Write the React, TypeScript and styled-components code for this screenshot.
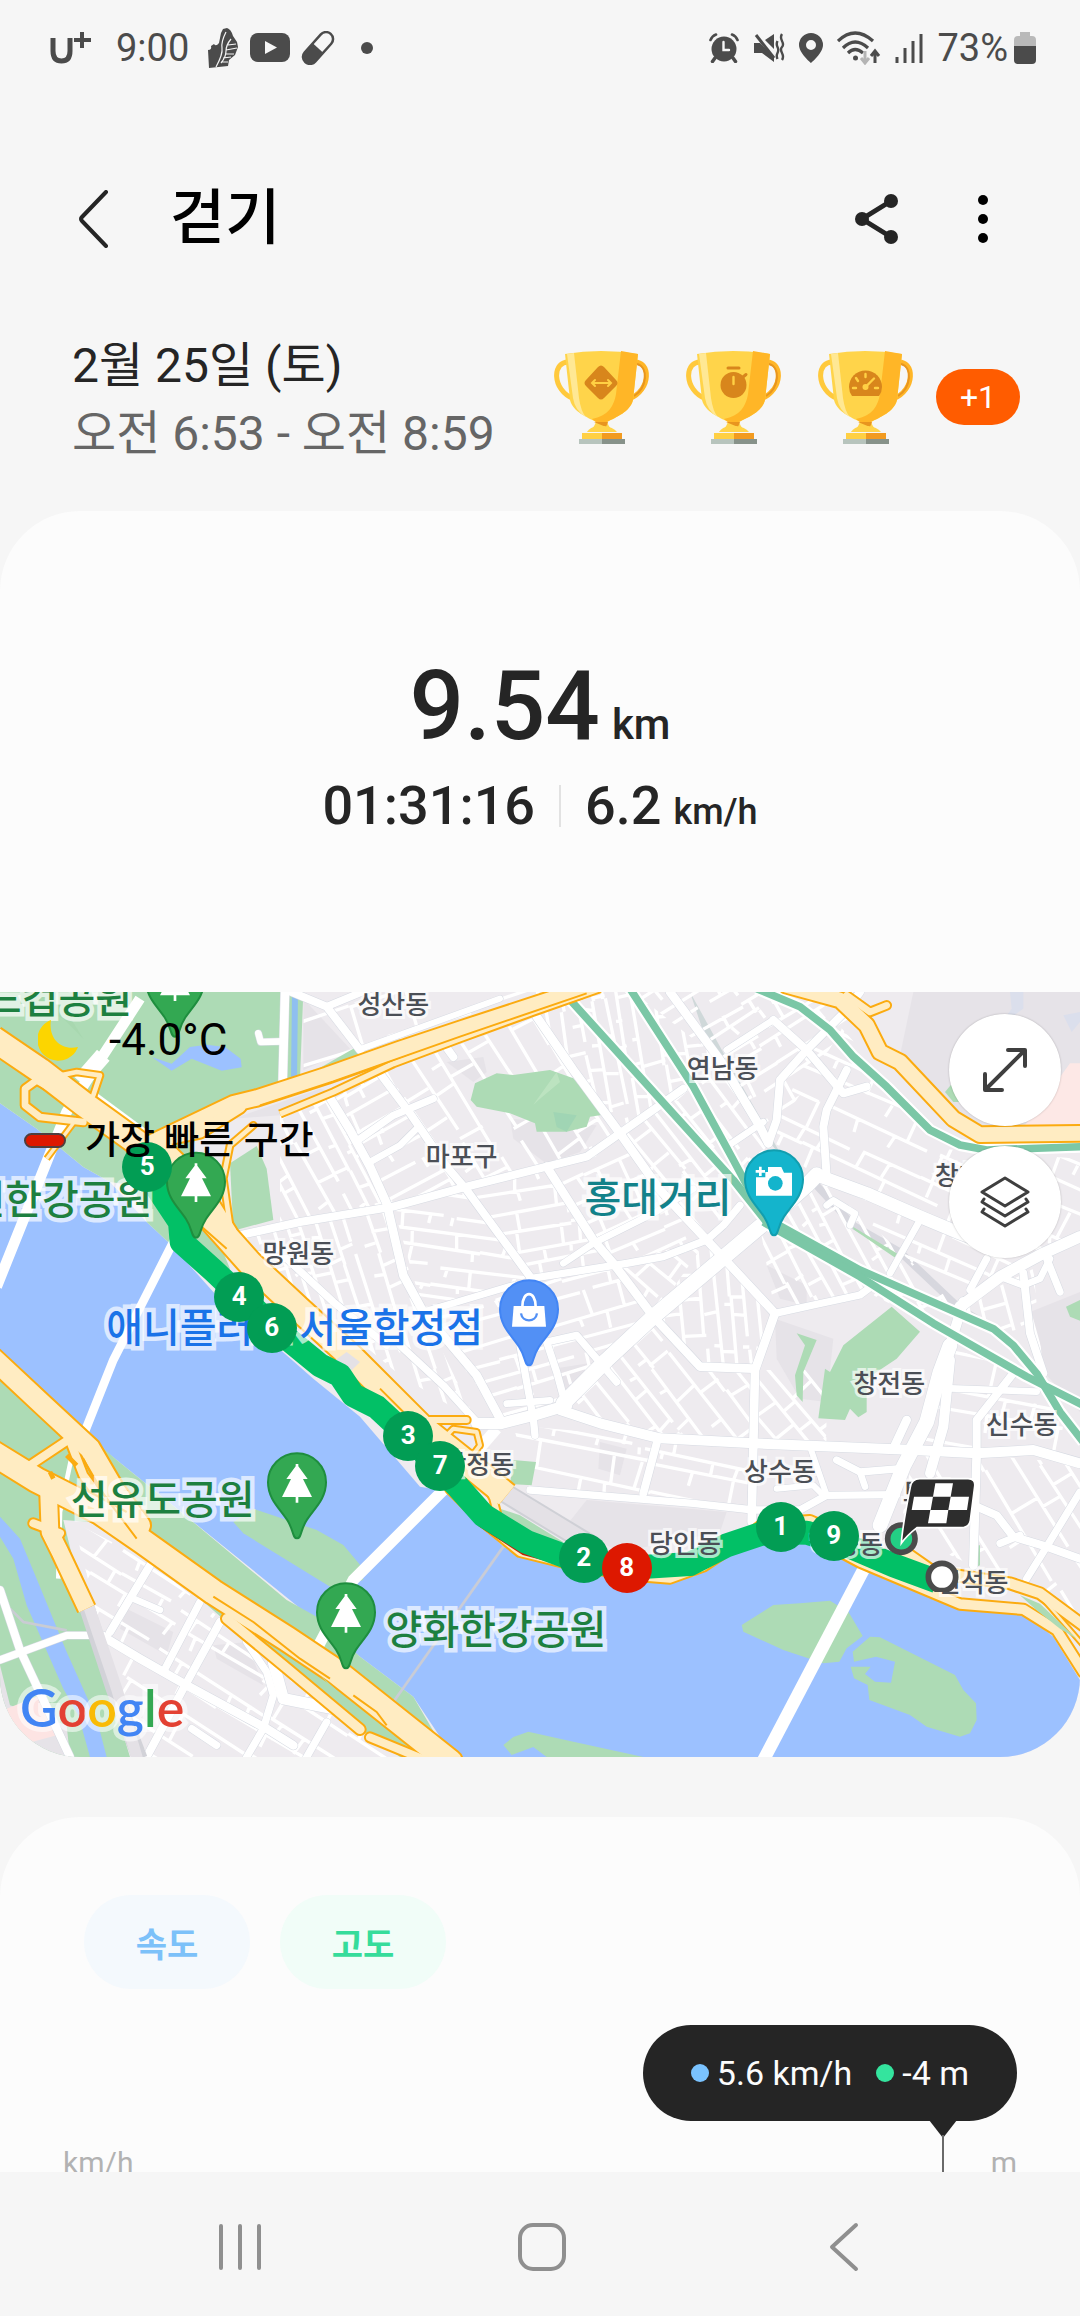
import React from "react";
import styled, { createGlobalStyle } from "styled-components";

const GlobalStyle = createGlobalStyle`
  *, *::before, *::after { box-sizing: border-box; }
  body {
    margin: 0;
    background: #f6f6f6;
    color: #252525;
    font-family: Roboto, "Noto Sans CJK KR", sans-serif;
  }
  button { border: 0; padding: 0; background: none; font: inherit; color: inherit; cursor: pointer; }
  h1, p { margin: 0; }
  svg { display: block; }
`;

/* ---------- shell ---------- */

const Screen = styled.div`
  display: flex;
  flex-direction: column;
  height: 100vh;
`;

const StatusBar = styled.div`
  display: flex;
  align-items: center;
  justify-content: space-between;
  flex: none;
  height: 96px;
  padding: 0 44px 0 50px;
  color: #4b4b4b;
  font-size: 38px;
  line-height: 44px;
`;

const StatusGroup = styled.div<{ $gap: number }>`
  display: flex;
  align-items: center;
  gap: ${(p) => p.$gap}px;
`;

const StatusTime = styled.span`
  margin: 0 7px 0 13px;
`;

const Content = styled.main`
  flex: 1;
  min-height: 0;
  overflow-y: auto;
  scrollbar-width: none;
`;

const TopBar = styled.header`
  display: flex;
  align-items: center;
  height: 234px;
  padding: 12px 67px 0 64px;
`;

const IconButton = styled.button`
  display: flex;
  align-items: center;
  justify-content: center;
  width: 60px;
  height: 72px;
`;

const Title = styled.h1`
  flex: 1;
  margin-left: 46px;
  color: #000;
  font-size: 60px;
  font-weight: 500;
  line-height: 72px;
`;

const TopActions = styled.div`
  display: flex;
  gap: 46px;
`;

const MetaRow = styled.section`
  display: flex;
  align-items: center;
  justify-content: space-between;
  margin-bottom: 43px;
  padding: 2px 60px 0 72px;
`;

const MetaLine = styled.p<{ $muted?: boolean }>`
  color: ${(p) => (p.$muted ? "#666" : "#252525")};
  font-size: 48px;
  line-height: 68px;
`;

const Awards = styled.div`
  display: flex;
  align-items: center;
  gap: 36px;
  padding-bottom: 6px;
`;

const MoreBadge = styled.button`
  width: 84px;
  height: 56px;
  margin-left: -14px;
  border-radius: 28px;
  background: #ff5c00;
  color: #fff;
  font-size: 32px;
  line-height: 56px;
`;

/* ---------- cards ---------- */

const WorkoutCard = styled.section`
  margin-bottom: 60px;
  overflow: hidden;
  border-radius: 80px;
  background: #fcfcfc;
`;

const Summary = styled.div`
  display: flex;
  flex-direction: column;
  align-items: center;
  gap: 12px;
  padding: 139px 24px 154px;
  font-weight: 500;
`;

const Distance = styled.p`
  font-size: 96px;
  line-height: 112px;
`;

const Unit = styled.span<{ $size: number }>`
  margin-left: 12px;
  font-size: ${(p) => p.$size}px;
  line-height: 1;
`;

const SubStats = styled.div`
  display: flex;
  align-items: center;
  font-size: 54px;
  line-height: 64px;
`;

const Divider = styled.span`
  width: 2px;
  height: 42px;
  margin: 0 24px;
  background: #e2e2e2;
`;

const ChartCard = styled.section`
  min-height: 640px;
  padding: 78px 63px 0;
  border-radius: 80px 80px 0 0;
  background: #fcfcfc;
`;

const Chips = styled.div`
  display: flex;
  gap: 30px;
  padding: 0 21px;
`;

const Chip = styled.button<{ $fg: string; $bg: string }>`
  width: 166px;
  height: 94px;
  border-radius: 47px;
  background: ${(p) => p.$bg};
  color: ${(p) => p.$fg};
  font-size: 34px;
  font-weight: 700;
`;

const TooltipRow = styled.div`
  display: flex;
  justify-content: flex-end;
  margin-top: 36px;
`;

const Tooltip = styled.div`
  position: relative;
  display: flex;
  align-items: center;
  height: 96px;
  padding: 0 48px;
  border-radius: 48px;
  background: #252525;
  color: #fcfcfc;
  font-size: 34px;
  line-height: 40px;

  &::before {
    content: "";
    position: absolute;
    top: 95px;
    right: 60px;
    border: 14px solid transparent;
    border-top: 18px solid #252525;
    border-bottom: 0;
  }

  &::after {
    content: "";
    position: absolute;
    top: 110px;
    right: 73px;
    width: 2px;
    height: 420px;
    background: #6a6a6a;
  }
`;

const Reading = styled.span<{ $dot: string }>`
  display: flex;
  align-items: center;
  gap: 8px;

  & + & { margin-left: 24px; }

  &::before {
    content: "";
    width: 18px;
    height: 18px;
    border-radius: 50%;
    background: ${(p) => p.$dot};
  }
`;

const AxisLabels = styled.div`
  display: flex;
  justify-content: space-between;
  margin-top: 24px;
  color: #b2b2b2;
  font-size: 30px;
  line-height: 36px;
`;

/* ---------- navigation bar ---------- */

const NavBar = styled.nav`
  display: flex;
  align-items: center;
  justify-content: space-around;
  flex: none;
  height: 144px;
  padding: 6px 85px 0 89px;
  background: #f6f6f6;
`;

const NavButton = styled.button`
  display: flex;
  align-items: center;
  justify-content: center;
  width: 120px;
  height: 100px;
`;

/* ---------- map ---------- */

const MAP_W = 3240;
const MAP_H = 2295;

const MapFrame = styled.div`
  position: relative;
  overflow: hidden;
  aspect-ratio: 1080 / 765;
  background: #eeebef;
`;

const MapSvg = styled.svg`
  width: 100%;
  height: 100%;
`;

const Pin = styled.div<{ $x: number; $y: number }>`
  position: absolute;
  left: ${(p) => (p.$x / MAP_W) * 100}%;
  top: ${(p) => (p.$y / MAP_H) * 100}%;
  transform: translate(-50%, -50%);
`;

const PlaceLabel = styled(Pin)<{ $color: string; $big?: boolean }>`
  color: ${(p) => p.$color};
  font-family: "Noto Sans CJK KR", sans-serif;
  font-size: ${(p) => (p.$big ? 40 : 26)}px;
  font-weight: 500;
  line-height: ${(p) => (p.$big ? 48 : 32)}px;
  white-space: nowrap;
  paint-order: stroke fill;
  -webkit-text-stroke: ${(p) => (p.$big ? 9 : 6)}px rgba(255, 255, 255, 0.66);
`;

const KmMarker = styled(Pin)<{ $fast?: boolean }>`
  width: 50px;
  height: 50px;
  border-radius: 50%;
  background: ${(p) => (p.$fast ? "#dd1800" : "#029d54")};
  color: #fff;
  font-size: 26px;
  font-weight: 700;
  line-height: 48px;
  text-align: center;
`;

const MapLegend = styled.div`
  position: absolute;
  top: 24px;
  left: 24px;
  display: grid;
  grid-template-columns: 42px auto;
  align-items: center;
  gap: 52px 19px;
  color: #000;
`;

const Temperature = styled.span`
  padding-left: 24px;
  font-size: 44px;
  line-height: 48px;
`;

const LegendText = styled.span`
  font-size: 38px;
  font-weight: 500;
  line-height: 48px;
`;

const MoonBox = styled.span`
  padding-left: 14px;
`;

const FastSwatch = styled.span`
  height: 15px;
  border: 2px solid #4f3f3f;
  border-radius: 8px;
  background: #dd1800;
`;

const MapActions = styled.div`
  position: absolute;
  top: 22px;
  right: 19px;
  display: flex;
  flex-direction: column;
  gap: 20px;
`;

const RoundButton = styled.button`
  display: flex;
  align-items: center;
  justify-content: center;
  width: 112px;
  height: 112px;
  border-radius: 50%;
  background: #fff;
  box-shadow: 0 0 2px rgba(0, 0, 0, 0.25);
`;

const Wordmark = styled.div`
  position: absolute;
  bottom: 18px;
  left: 20px;
  font-family: Lato, sans-serif;
  font-size: 52px;
  font-weight: 600;
  line-height: 64px;
  paint-order: stroke fill;
  -webkit-text-stroke: 10px rgba(255, 255, 255, 0.55);
`;

const Letter = styled.span<{ $c: string }>`
  color: ${(p) => p.$c};
`;

type Pt = [number, number];
const line = (pts: Pt[]) => "M" + pts.map((p) => p.join(",")).join("L");

const rng = (seed: number) => () => {
  seed = (seed * 1664525 + 1013904223) % 4294967296;
  return seed / 4294967296;
};

/* Lanes of one city block: long streets at an angle, joined by short cross streets. */
const lanes = (poly: Pt[], angle: number, step: number, seed: number) => {
  const r = rng(seed);
  const cx = poly.reduce((s, p) => s + p[0], 0) / poly.length;
  const cy = poly.reduce((s, p) => s + p[1], 0) / poly.length;
  const R = Math.max(...poly.map((p) => Math.hypot(p[0] - cx, p[1] - cy)));
  const a = (angle * Math.PI) / 180;
  const at = (u: number, v: number) =>
    `${Math.round(cx + u * Math.cos(a) - v * Math.sin(a))},${Math.round(cy + u * Math.sin(a) + v * Math.cos(a))}`;
  let d = "";
  for (let v = -R; v < R; ) {
    const next = v + step * (0.7 + r() * 0.8);
    let u = -R;
    while (u < R) {
      const len = 160 + r() * 320;
      const bend = (r() - 0.5) * 20;
      d += `M${at(u, v)}L${at(u + len, v + bend)}`;
      u += len + (r() > 0.6 ? 40 : 0);
    }
    for (u = -R; u < R; u += step * (1 + r() * 2)) {
      if (r() > 0.2) d += `M${at(u, v)}L${at(u + (r() - 0.5) * 16, r() > 0.7 ? (v + next) / 2 : next)}`;
    }
    v = next;
  }
  return d;
};

const BLOCKS: { p: Pt[]; a: number; s: number }[] = [
  { p: [[910, 0], [1700, 0], [1200, 150], [910, 250]], a: -18, s: 84 },
  { p: [[840, 370], [985, 309], [1160, 640], [840, 700]], a: 62, s: 42 },
  { p: [[985, 309], [1140, 244], [1400, 584], [1160, 640]], a: -28, s: 50 },
  { p: [[1140, 244], [1610, 74], [1860, 424], [1640, 524], [1400, 584]], a: 58, s: 58 },
  { p: [[1610, 74], [1700, 0], [1900, 0], [2160, 204], [1860, 424]], a: 80, s: 52 },
  { p: [[1900, 0], [2600, 0], [2305, 454], [2160, 204]], a: -32, s: 50 },
  { p: [[1860, 424], [2160, 204], [2305, 454], [2120, 744]], a: 52, s: 54 },
  { p: [[1180, 644], [1400, 584], [1590, 854], [1270, 960]], a: 8, s: 50 },
  { p: [[1400, 584], [1640, 524], [1840, 814], [1590, 854]], a: -10, s: 48 },
  { p: [[1640, 524], [1860, 424], [2120, 744], [1840, 814]], a: -24, s: 50 },
  { p: [[720, 734], [1160, 640], [1270, 960], [1430, 1290], [1200, 1150], [900, 900]], a: 72, s: 46 },
  { p: [[1270, 960], [1840, 814], [1960, 974], [1690, 1250], [1510, 1290]], a: -16, s: 56 },
  { p: [[1840, 814], [2120, 744], [1960, 974]], a: 40, s: 50 },
  { p: [[1960, 974], [2120, 744], [2325, 964], [2260, 1130], [2100, 1124]], a: 84, s: 50 },
  { p: [[1690, 1250], [1960, 974], [2100, 1124], [2260, 1130], [2260, 1350], [1980, 1339]], a: 52, s: 48 },
  { p: [[1540, 1300], [1980, 1339], [2260, 1354], [2260, 1550], [1590, 1494]], a: 12, s: 56 },
  { p: [[2305, 454], [2480, 60], [2700, 300], [2820, 470], [3240, 500], [3240, 734], [2880, 944], [2450, 549]], a: 24, s: 60 },
  { p: [[2325, 964], [2280, 704], [2450, 549], [2880, 944], [2800, 1000], [2600, 900]], a: 62, s: 52 },
  { p: [[2260, 1134], [2480, 1134], [2480, 1374], [2260, 1354]], a: 50, s: 56 },
  { p: [[2740, 1374], [3240, 1414], [3240, 1880], [2960, 1740], [2700, 1620]], a: 58, s: 84 },
  { p: [[2840, 1060], [3100, 1160], [3240, 1300], [3240, 1400], [2740, 1374]], a: 10, s: 84 },
  { p: [[2880, 944], [3100, 830], [3130, 1144], [2980, 1020]], a: 76, s: 48 },
  { p: [[220, 1590], [440, 1704], [680, 1894], [1000, 2164], [1200, 2295], [400, 2295]], a: 32, s: 64 },
];

const ROADS: { p: Pt[]; w: number }[] = [
  { p: [[1140, 244], [1230, 364], [1340, 524], [1400, 594], [1590, 854]], w: 24 },
  { p: [[985, 309], [1050, 414], [1110, 524], [1160, 634], [1180, 720], [1210, 850], [1270, 960], [1430, 1150], [1500, 1280]], w: 26 },
  { p: [[1200, 1060], [1330, 1180], [1430, 1290]], w: 22 },
  { p: [[700, 734], [900, 690], [1180, 644], [1400, 584], [1640, 524], [1760, 494], [1860, 424], [2050, 290]], w: 24 },
  { p: [[1080, 440], [1180, 370], [1300, 320]], w: 22 },
  { p: [[1110, 510], [1200, 460], [1255, 405]], w: 20 },
  { p: [[1335, 160], [1360, 195]], w: 24 },
  { p: [[2180, 174], [2320, 84]], w: 20 },
  { p: [[1610, 74], [1720, 234], [1860, 424], [1980, 594], [2120, 744], [2325, 964], [2265, 1134], [2255, 1590]], w: 26 },
  { p: [[1640, 524], [1780, 744], [1840, 814], [1960, 974], [2100, 1124], [2260, 1130]], w: 26 },
  { p: [[1590, 860], [1880, 814], [1990, 794], [2120, 744], [2170, 700], [2220, 640]], w: 22 },
  { p: [[1690, 814], [1780, 754], [1960, 664], [2080, 590]], w: 20 },
  { p: [[1270, 960], [1540, 880]], w: 20 },
  { p: [[2450, 549], [2420, 580], [2280, 704], [1960, 974], [1820, 1104], [1690, 1234]], w: 46 },
  { p: [[1700, 1240], [1600, 1270], [1500, 1295], [1430, 1294]], w: 34 },
  { p: [[1700, 1250], [1670, 1140], [1640, 1050], [1730, 1030], [1790, 1100], [1850, 1170]], w: 22 },
  { p: [[1560, 1060], [1600, 1280], [1605, 1330]], w: 22 },
  { p: [[1520, 1235], [1650, 1225]], w: 20 },
  { p: [[720, 780], [860, 800], [1000, 930], [1160, 1060]], w: 22 },
  { p: [[1680, 1254], [1800, 1294], [1980, 1339], [2260, 1354], [2740, 1374], [2930, 1384], [3100, 1374], [3240, 1414]], w: 30 },
  { p: [[1970, 1354], [1930, 1504]], w: 24 },
  { p: [[1590, 1494], [2080, 1534], [2260, 1554], [2400, 1554], [2480, 1510], [2690, 1508]], w: 22 },
  { p: [[2330, 1490], [2440, 1480], [2470, 1510]], w: 18 },
  { p: [[2430, 1364], [2480, 1510]], w: 18 },
  { p: [[2850, 1060], [2820, 1140], [2780, 1290], [2710, 1424], [2640, 1600]], w: 44 },
  { p: [[2850, 1104], [2830, 1304], [2790, 1444]], w: 30 },
  { p: [[2510, 1404], [2580, 1440], [2700, 1430]], w: 22 },
  { p: [[2580, 1440], [2595, 1484]], w: 20 },
  { p: [[2720, 1284], [2680, 1370]], w: 26 },
  { p: [[2450, 549], [2600, 604], [2760, 674], [2880, 724], [3000, 770]], w: 38 },
  { p: [[2880, 944], [3000, 854], [3130, 784], [3240, 734]], w: 34 },
  { p: [[2890, 930], [2850, 1060]], w: 30 },
  { p: [[2960, 800], [2910, 894]], w: 22 },
  { p: [[3000, 854], [3070, 880], [3120, 860], [3150, 800]], w: 20 },
  { p: [[3140, 800], [3180, 900]], w: 22 },
  { p: [[2480, 554], [2470, 404], [2480, 354], [2540, 234]], w: 24 },
  { p: [[2305, 454], [2330, 384], [2340, 264], [2420, 174], [2540, 54], [2580, 0]], w: 24 },
  { p: [[2320, 84], [2420, 174], [2530, 304], [2600, 284]], w: 24 },
  { p: [[2010, 0], [2160, 204], [2280, 404], [2305, 454]], w: 26 },
  { p: [[2180, 464], [2290, 390]], w: 20 },
  { p: [[2760, 684], [2670, 844]], w: 20 },
  { p: [[2325, 964], [2440, 939], [2580, 909], [2640, 864]], w: 22 },
  { p: [[2480, 640], [2500, 625], [2565, 665], [2550, 700]], w: 20 },
  { p: [[3070, 844], [3090, 1024], [3130, 1144]], w: 24 },
  { p: [[2930, 1384], [2930, 1284], [3040, 1144]], w: 24 },
  { p: [[2930, 1384], [2920, 1720]], w: 26 },
  { p: [[2850, 1189], [3110, 1199]], w: 20 },
  { p: [[2930, 1544], [2990, 1570], [3040, 1634], [3140, 1664], [3240, 1700]], w: 24 },
  { p: [[3240, 1500], [3140, 1664], [3080, 1760]], w: 22 },
  { p: [[3000, 1654], [3060, 1630]], w: 22 },
  { p: [[850, -10], [980, 44], [1080, 174]], w: 24 },
  { p: [[980, 44], [1110, -10]], w: 22 },
  { p: [[1085, 170], [1500, 20]], w: 18 },
  { p: [[775, 124], [782, 150], [850, 148]], w: 20 },
  { p: [[855, 0], [848, 270]], w: 26 },
  { p: [[0, 1794], [60, 1974], [210, 2295]], w: 24 },
  { p: [[0, 2004], [200, 1930], [310, 1930]], w: 22 },
  { p: [[330, 1920], [450, 1720]], w: 24 },
  { p: [[400, 1820], [480, 1854]], w: 20 },
  { p: [[490, 2040], [600, 1830]], w: 22 },
  { p: [[320, 1940], [420, 2000], [560, 2080], [800, 2210], [880, 2260]], w: 26 },
  { p: [[660, 1890], [550, 2090], [440, 2295]], w: 24 },
  { p: [[740, 1950], [800, 2040], [820, 2110], [790, 2210], [740, 2295]], w: 22 },
  { p: [[820, 2010], [850, 2120], [1000, 2150]], w: 34 },
  { p: [[980, 2190], [920, 2295]], w: 22 },
  { p: [[575, 2210], [650, 2260]], w: 22 },
];

const HIGHWAYS: { p: Pt[]; w: number; flat?: boolean }[] = [
  { p: [[460, 450], [700, 335], [770, 318], [980, 250], [1200, 172], [1380, 112], [1740, -6]], w: 52 },
  { p: [[460, 450], [600, 420], [720, 345]], w: 40 },
  { p: [[840, 366], [1000, 300], [1180, 215], [1380, 140], [1600, 60], [1800, -10]], w: 22, flat: true },
  { p: [[190, 310], [110, 265], [75, 290], [75, 340], [120, 375], [250, 390]], w: 26 },
  { p: [[110, 265], [230, 240], [300, 250], [280, 310]], w: 20 },
  { p: [[140, 500], [230, 380]], w: 16, flat: true },
  { p: [[690, 700], [670, 560], [690, 460], [760, 400]], w: 20 },
  { p: [[500, 470], [590, 560], [690, 720]], w: 46 },
  { p: [[-20, 140], [120, 235], [250, 335], [430, 465], [540, 560], [640, 690], [750, 814], [900, 954], [1060, 1100], [1260, 1300], [1410, 1420], [1520, 1510]], w: 78, flat: true },
  { p: [[1280, 1284], [1400, 1284]], w: 24 },
  { p: [[1340, 1330], [1360, 1310], [1430, 1320], [1440, 1360], [1410, 1400]], w: 18 },
  { p: [[1440, 1440], [1480, 1520], [1500, 1600]], w: 24 },
  { p: [[1350, 1490], [1450, 1590], [1560, 1680], [1690, 1712], [1880, 1750], [2010, 1760], [2110, 1724], [2200, 1664], [2290, 1594], [2430, 1584], [2560, 1640]], w: 30 },
  { p: [[2270, 1640], [2430, 1630], [2580, 1710], [2880, 1836], [3070, 1852], [3170, 1914], [3250, 2040]], w: 34 },
  { p: [[2700, 1670], [2800, 1740], [3030, 1774], [3120, 1804], [3250, 1900]], w: 36 },
  { p: [[3120, 1810], [3250, 1960]], w: 14 },
  { p: [[2360, -20], [2520, 24], [2600, 100], [2640, 180], [2700, 210], [2860, 380], [2940, 428], [3250, 424]], w: 50 },
  { p: [[2540, 10], [2610, 60], [2660, 40]], w: 26 },
  { p: [[-20, 1400], [90, 1420], [210, 1340]], w: 30 },
  { p: [[-20, 1100], [130, 1240], [270, 1370], [340, 1490], [420, 1600]], w: 66 },
  { p: [[200, 1320], [250, 1450], [380, 1620]], w: 30 },
  { p: [[100, 1594], [180, 1624]], w: 30 },
  { p: [[145, 1480], [150, 1620], [180, 1680], [260, 1850]], w: 56, flat: true },
  { p: [[680, 1880], [850, 2020], [1080, 2212]], w: 34 },
  { p: [[1110, 2236], [1290, 2310]], w: 30 },
  { p: [[-20, 1384], [110, 1464], [300, 1560], [430, 1650], [640, 1800], [860, 1940], [1010, 2040], [1350, 2310]], w: 78 },
];

const RAILS: Pt[][] = [
  [[1680, -10], [2200, 564], [2300, 690]],
  [[1890, -10], [2080, 284], [2200, 504], [2300, 690]],
  [[2290, 674], [2580, 834], [2980, 1010], [3040, 1060], [3110, 1144], [3180, 1260], [3250, 1350]],
  [[2290, 690], [2580, 854], [2800, 994], [3080, 1154], [3250, 1240]],
  [[2270, -10], [2400, 44], [2490, 114], [2560, 194], [2660, 284], [2790, 414], [2880, 459], [2960, 474], [3250, 464]],
];

const ROUTE: Pt[] = [
  [400, 500], [460, 570], [540, 690], [545, 750], [640, 835], [740, 930], [850, 1030], [960, 1120], [1020, 1150],
  [1060, 1210], [1130, 1245], [1225, 1333], [1290, 1400], [1370, 1480], [1450, 1570], [1580, 1650], [1700, 1694],
  [1880, 1728], [2070, 1716], [2180, 1660], [2300, 1620], [2420, 1622], [2540, 1660], [2680, 1720], [2810, 1768],
];

const MARKERS: { n: number; x: number; y: number; fast?: boolean }[] = [
  { n: 5, x: 442, y: 524 },
  { n: 4, x: 718, y: 915 },
  { n: 6, x: 815, y: 1009 },
  { n: 3, x: 1225, y: 1333 },
  { n: 7, x: 1321, y: 1423 },
  { n: 2, x: 1751, y: 1699 },
  { n: 8, x: 1880, y: 1729, fast: true },
  { n: 1, x: 2342, y: 1606 },
  { n: 9, x: 2501, y: 1633 },
];

const GREY = "#4b4f56";
const GREEN = "#1d8040";
const LABELS: { t: string; x: number; y: number; c: string; big?: boolean }[] = [
  { t: "월드컵공원", x: 120, y: 13, c: GREEN, big: true },
  { t: "망원한강공원", x: 126, y: 615, c: GREEN, big: true },
  { t: "선유도공원", x: 488, y: 1515, c: GREEN, big: true },
  { t: "양화한강공원", x: 1488, y: 1905, c: GREEN, big: true },
  { t: "애니플러스 서울합정점", x: 884, y: 998, c: "#1a73e8", big: true },
  { t: "홍대거리", x: 1974, y: 609, c: "#13828a", big: true },
  { t: "성산동", x: 1180, y: 32, c: GREY },
  { t: "연남동", x: 2168, y: 226, c: GREY },
  { t: "마포구", x: 1385, y: 490, c: GREY },
  { t: "망원동", x: 895, y: 780, c: GREY },
  { t: "합정동", x: 1435, y: 1414, c: GREY },
  { t: "당인동", x: 2055, y: 1650, c: GREY },
  { t: "상수동", x: 2340, y: 1434, c: GREY },
  { t: "창전동", x: 2668, y: 1170, c: GREY },
  { t: "신수동", x: 3065, y: 1292, c: GREY },
  { t: "하중동", x: 2541, y: 1654, c: GREY },
  { t: "현석동", x: 2918, y: 1767, c: GREY },
  { t: "창천동", x: 2912, y: 545, c: GREY },
  { t: "토정동", x: 2816, y: 1498, c: GREY },
];

const PARK = "#addbb5";
const WATER = "#9cc1ff";
const HW_EDGE = "#fbab10";
const HW_FILL = "#ffecc2";

const Drop = ({ x, y, fill, edge, children }: { x: number; y: number; fill: string; edge: string; children: React.ReactNode }) => (
  <g transform={`translate(${x} ${y})`}>
    <path
      d="M0 168C-14 168-10 142-30 112C-52 78-87 50-87 0A87 87 0 1 1 87 0C87 50 52 78 30 112C10 142 14 168 0 168Z"
      fill={fill}
      stroke={edge}
      strokeWidth="6"
    />
    {children}
  </g>
);

const TreeDrop = ({ x, y }: { x: number; y: number }) => (
  <Drop x={x} y={y} fill="#33a852" edge="#1e8e3e">
    <path d="M-4-55H4V-48L32-10H18L45 44H4V61H-4V44H-45L-18-10H-32L-4-48Z" fill="#fff" />
  </Drop>
);

const MapArt = () => (
  <MapSvg viewBox={`0 0 ${MAP_W} ${MAP_H}`} preserveAspectRatio="xMidYMid slice" aria-hidden="true">
    <defs>
      {BLOCKS.map((b, i) => (
        <clipPath id={`block${i}`} key={i}>
          <polygon points={b.p.join(" ")} />
        </clipPath>
      ))}
    </defs>
    <rect width={MAP_W} height={MAP_H} fill="#eeebef" />

    {/* built-up patches */}
    <g fill="#e6e3e8">
      <path d="M2740 0H3240V430H2940L2700 190Z" />
      <path d="M1340 210L1450 195L1460 240L1420 270Z" />
      <path d="M1530 380L1790 400L1740 480L1640 515L1540 440Z" />
      <path d="M2325 980L2500 1040L2480 1230L2400 1220L2330 1100Z" />
      <path d="M1760 1524L2180 1560L2160 1620L1860 1680L1700 1600Z" />
      <path d="M1800 1350L1880 1370L1860 1450L1795 1430Z" />
      <path d="M3090 960L3240 900V1260L3140 1150Z" />
      <path d="M2300 820L2420 880L2420 940L2340 920Z" />
      <path d="M700 380L960 290L1000 300L840 370Z" />
      <path d="M910 20L1050 170L910 235Z" />
      <path d="M1660 1130L1790 1110L1700 1220Z" />
    </g>
    <path d="M3060 420L3210 214H3240V420Z" fill="#fde8e6" />
    <path d="M3030 0H3070V50L3020 85H3010L3035 50ZM3190 70L3240 60V90L3215 120Z" fill="#dbdfec" />
    <path d="M2070 0L2180 200L2350 500L2300 440L2130 180Z" fill="#cfd8d9" />
    <path d="M2440 570L2560 700L2700 780L2880 950L2930 980" fill="none" stroke="#d7d7de" strokeWidth="22" />

    {/* lanes */}
    {BLOCKS.map((b, i) => (
      <path
        key={i}
        d={lanes(b.p, b.a, b.s, 77 + i * 31)}
        clipPath={`url(#block${i})`}
        fill="none"
        stroke="#fff"
        strokeWidth="10"
      />
    ))}

    {/* river and banks */}
    <path
      d="M0 334L110 410L250 525L330 570L440 690L515 760L640 900L780 1020L940 1160L1080 1274L1260 1484L1350 1499L1440 1594L1510 1664L1680 1724L1950 1770L2080 1754L2180 1694L2280 1654L2430 1649L2580 1724L2880 1850L3080 1870L3160 1934L3240 2064V2295H1360L1240 2114L1080 1994L350 1404L140 1234L0 1084Z"
      fill={WATER}
    />
    <g fill={PARK}>
      <path d="M0 0H910L900 262L740 320L600 400L560 520L620 660L690 830L640 850L515 760L440 690L400 580L330 570L250 525L110 410L0 334Z" />
      <path d="M690 514L770 462L800 530L820 684L700 716Z" />
      <path d="M900 262L1060 170L1090 180L980 230Z" />
      <path d="M0 1084L80 1170L350 1404L560 1574L860 1824L950 1874L1080 1994L1240 2114L1310 2234L1375 2295H0Z" />
      <path d="M700 1590L760 1550L950 1614L1030 1659L1085 1724L1090 1764L1000 1790L730 1624Z" />
      <path d="M1425 274L1490 244L1540 249L1650 234L1720 259L1810 368L1770 374L1760 404L1700 419L1610 419L1605 394L1530 364L1430 344L1412 324Z" />
      <path d="M2490 1140L2530 1060L2675 944L2760 1019L2690 1100L2600 1160L2600 1260L2575 1276L2550 1250L2535 1284L2455 1279L2475 1130Z" />
      <path d="M2390 1024L2450 1044L2410 1140L2408 1230L2390 1210L2385 1150L2415 1060Z" />
      <path d="M3240 924L3198 944L3210 974L3240 986Z" />
      <path d="M2835 300L2860 270L2880 330L2860 330Z" />
      <path d="M2920 1660H2940V1720L2920 1730Z" />
      <path d="M1540 1404L1608 1410L1595 1480L1530 1476Z" />
      <path d="M1500 1550L1560 1570L1690 1650L1600 1660L1510 1600Z" />
      <path d="M2560 705L2700 790L2690 800L2560 712Z" />
      <path d="M2225 1899L2320 1839L2400 1834L2490 1826L2545 1859L2588 1932L2540 1969L2518 2009L2470 2014L2350 1974L2230 1919Z" />
      <path d="M2558 1979L2610 1934L2640 1936L2865 2049L2890 2094L2928 2134L2930 2184L2910 2224L2880 2234L2780 2204L2730 2169L2608 2124L2603 2079L2562 2059L2552 2024H2612L2595 2046L2625 2069L2673 2072L2685 2009L2628 1994L2562 2009Z" />
      <path d="M1510 2259L1540 2235L1585 2219L1720 2249L1930 2295H1640L1600 2265L1535 2289Z" />
    </g>
    <path d="M1600 338L1670 240L1680 270L1620 320Z" fill="#bce3c0" />
    <path d="M1660 360L1730 370L1700 419L1670 405Z" fill="#a0d5b4" />
    <path d="M20 0L190 80L250 140L200 60L300 0Z" fill="#a5d6ad" opacity=".7" />
    <path d="M455 195L515 236L575 200L665 236L725 226L722 200L675 165L620 158L570 165L515 215Z" fill={WATER} />
    <path d="M885 0L882 270" stroke="#8fbff0" strokeWidth="18" />
    <path d="M0 1574L60 1640L110 1760L200 1980L290 2180L320 2295H270L235 2170L190 2090L80 1840L40 1700L0 1634Z" fill={WATER} />

    {/* south bank town */}
    <path d="M190 1584L270 1590L440 1700L600 1820L680 1890L1010 2160L1200 2295H390L250 1830Z" fill="#eeebef" />
    <path d="M380 1850L520 1920L500 1990L360 1910ZM640 1960L740 1950L790 2080L650 2000Z" fill="#e6e3e8" />
    <path
      d={lanes(BLOCKS[22].p, 32, 62, 901)}
      clipPath="url(#block22)"
      fill="none"
      stroke="#fff"
      strokeWidth="10"
    />
    <path d="M0 2020L30 2140L200 2200L210 2295H0Z" fill="#e6e3e8" />
    <path d="M20 2150L120 2110L170 2230L60 2260Z" fill="#fde4e3" />
    <path d="M30 1850L70 1890L200 1915" fill="none" stroke="#c9ccd3" strokeWidth="8" />

    {/* bridges */}
    <g fill="none" stroke="#fff">
      <path d="M-10 884L200 360L270 250L420 20" strokeWidth="32" />
      <path d="M240 270L310 190" strokeWidth="50" />
      <path d="M530 730L340 1104L250 1330" strokeWidth="26" />
      <path d="M1340 1484L1060 1764L940 1990" strokeWidth="34" />
      <path d="M1490 1310L1340 1484" strokeWidth="34" />
      <path d="M2590 1734L2290 2305" strokeWidth="38" />
      <path d="M220 1370L180 1560L175 1760" strokeWidth="14" />
      <path d="M1040 2060L1160 2130L1190 2170" strokeWidth="26" />
      <path d="M270 300L460 440" strokeWidth="20" />
    </g>
    <path d="M1560 1600L1510 1664L1170 2144" fill="none" stroke="#c9ccd6" strokeWidth="8" />

    {/* roads */}
    <g fill="none" strokeLinecap="round" strokeLinejoin="round">
      {ROADS.map((r, i) => (
        <path key={`c${i}`} d={line(r.p)} stroke="#d6dae2" strokeWidth={r.w + 3} />
      ))}
      {ROADS.map((r, i) => (
        <path key={`f${i}`} d={line(r.p)} stroke="#fff" strokeWidth={r.w} />
      ))}
    </g>

    {/* railways */}
    <g fill="none" strokeLinejoin="round">
      {RAILS.map((p, i) => (
        <path key={`w${i}`} d={line(p)} stroke="#fff" strokeWidth="36" />
      ))}
      {RAILS.map((p, i) => (
        <path key={`g${i}`} d={line(p)} stroke="#7bc7a6" strokeWidth="23" />
      ))}
    </g>

    {/* expressways */}
    <path d="M1510 1500L1780 1664" stroke="#cfd0d6" strokeWidth="62" />
    <path d="M1510 1500L1780 1664" stroke="#e4e1e6" strokeWidth="50" />
    <path d="M255 1830L340 2090L420 2300" fill="none" stroke="#d2d2d8" strokeWidth="46" />
    <path d="M262 1830L350 2090L412 2300" fill="none" stroke="#e4e1e6" strokeWidth="34" />
    <g fill="none" strokeLinejoin="round">
      {HIGHWAYS.map((h, i) => (
        <path key={`e${i}`} d={line(h.p)} stroke={HW_EDGE} strokeWidth={h.w + 6} strokeLinecap={h.flat ? "butt" : "round"} />
      ))}
      {HIGHWAYS.map((h, i) => (
        <path key={`h${i}`} d={line(h.p)} stroke={HW_FILL} strokeWidth={h.w - 6} strokeLinecap={h.flat ? "butt" : "round"} />
      ))}
      <g stroke={HW_EDGE} strokeWidth="6">
        <path d="M780 340L1000 268L1380 134L1760 4" />
        <path d="M640 1814L760 1890L900 2000L990 2060" />
        <path d="M1060 2110L1130 2160L1160 2200M600 700L680 770M1140 1190L1210 1260" />
        <path d="M250 1400L290 1480L410 1640M270 1500L380 1560" />
        <path d="M150 1440L160 1460M200 1390L230 1420" strokeWidth="14" />
      </g>
    </g>
    <path d="M985 1120L1040 1080L1080 1110L1040 1150Z" fill="#e4e1e6" />
    <path d="M960 2050L1100 2200L1130 2195L1060 2140Z" fill={PARK} />
    <path d="M3060 1810L3120 1835L3230 1940L3180 1910L3110 1855Z" fill={PARK} />

    {/* walked route */}
    <path d="M1345 1490L1440 1600L1570 1684L1690 1716" fill="none" stroke="#c41c00" strokeWidth="10" />
    <path d={line(ROUTE)} fill="none" stroke="#02c066" strokeWidth="72" strokeLinejoin="round" />

    <TreeDrop x={525} y={-34} />
    <TreeDrop x={588} y={569} />
    <TreeDrop x={891} y={1471} />
    <TreeDrop x={1038} y={1861} />
    <Drop x={2322} y={562} fill="#14b4cc" edge="#129eaf">
      <path d="M-54 49V-6H-26V-22H-18V-37H22L30-20H54V49Z" fill="#fff" />
      <path d="M-41-38V-10M-55-24H-27" stroke="#fff" strokeWidth="8" />
      <circle cx="4" cy="12" r="22" fill="#14b4cc" />
    </Drop>
    <Drop x={1587} y={952} fill="#5290f5" edge="#4285f4">
      <path d="M-46-10H46L51 52H-51Z" fill="#fff" />
      <path d="M-20-8C-20-58 20-58 20-8" fill="none" stroke="#fff" strokeWidth="8" />
      <path d="M-24 12C-20 40 20 40 24 12" fill="none" stroke="#5290f5" strokeWidth="7" />
    </Drop>
  </MapSvg>
);

const FinishFlag = () => (
  <svg width="92" height="120" viewBox="0 0 276 360" aria-hidden="true">
    <circle cx="55" cy="200" r="41" fill="#23cf84" stroke="#4b4b4b" strokeWidth="17" />
    <circle cx="177" cy="315" r="41" fill="#fff" stroke="#4b4b4b" strokeWidth="17" />
    <path
      d="M110 20H255Q278 20 275 43L262 145Q258 167 235 167H102Q72 190 55 214Q58 165 82 45Q86 20 110 20Z"
      fill="#2d2d2d"
      stroke="#fff"
      strokeWidth="5"
    />
    <path
      d="M157 34H210L203 74H258L252 114H196L190 154H135L142 114H86L93 74H150ZM150 74L143 114H196L203 74Z"
      fill="#fff"
      fillRule="evenodd"
    />
  </svg>
);

const FlagPin = styled(Pin)`
  width: 92px;
  height: 120px;
`;

/* ---------- icons ---------- */

const TROPHY_MARKS: Record<string, React.ReactNode> = {
  distance: (
    <>
      <path d="M44 17Q47 14 50 17L62 30Q65 33 62 36L50 48Q47 51 44 48L32 36Q29 33 32 30Z" fill="#d8861c" />
      <path d="M39 33H56M41 30L38 33L41 36M54 30L57 33L54 36" fill="none" stroke="#ffd044" strokeWidth="2" strokeLinecap="round" />
    </>
  ),
  duration: (
    <>
      <circle cx="47.500" cy="35" r="13" fill="#d8861c" />
      <path d="M42 18H53M57 27L60 24.500" stroke="#d8861c" strokeWidth="3" strokeLinecap="round" />
      <path d="M47.500 27V34" stroke="#ffd044" strokeWidth="2.400" strokeLinecap="round" />
    </>
  ),
  speed: (
    <>
      <path d="M34 46Q31 42 31 37A16.500 16.500 0 0 1 64 37Q64 42 61 46Z" fill="#d8861c" />
      <path d="M35 38H38M57 38H60M38 28L40 31M47.500 24V27M47.500 37L56 28.500" stroke="#ffd044" strokeWidth="2.400" strokeLinecap="round" />
      <circle cx="47.500" cy="37" r="3" fill="#ffd044" />
    </>
  ),
};

const Trophy = ({ kind, label }: { kind: string; label: string }) => (
  <svg width="96" height="94" viewBox="0 0 96 94" role="img" aria-label={label}>
    <path d="M16 12C-2 10-3 40 20 49" fill="none" stroke="#ffc93c" strokeWidth="5" />
    <path d="M79 12C97 10 98 40 75 49" fill="none" stroke="#ffb627" strokeWidth="5" />
    <path d="M83 14C95 17 93 38 80 46" fill="none" stroke="#e8951f" strokeWidth="2" />
    <path d="M11 4Q47-2 84 4L79 50C76 62 62 67 53 72Q56 80 62 82H33Q39 80 42 72C33 67 19 62 16 50Z" fill="#ffd44a" />
    <path d="M67 1L84 4L79 50C76 62 62 67 53 72L42 72L38 69C54 66 60 56 62 44Z" fill="#ffb627" />
    <path d="M13 4L20 3L25 48Q27 62 32 67Q21 61 19 48Z" fill="#ffe894" />
    <path d="M40 72H54L52 77Z" fill="#e8951f" />
    <path d="M33 82Q36 77 44 76H50Q59 77 63 82Z" fill="#ffd44a" />
    <path d="M28 83H48V89H28Z" fill="#ffd044" />
    <path d="M48 83H68V89H48Z" fill="#f29b20" />
    <path d="M25 89H48V94H25Z" fill="#b7c4bd" />
    <path d="M48 89H71V94H48Z" fill="#87928a" />
    {TROPHY_MARKS[kind]}
  </svg>
);

const CarrierIcon = () => (
  <svg width="42" height="34" viewBox="0 0 42 34" fill="none" stroke="#4b4b4b" aria-label="U+" role="img">
    <path d="M3 7V20Q3 30 11.500 30T20 20V7" strokeWidth="5" />
    <path d="M32 1V17M24 9H41" strokeWidth="4" />
  </svg>
);

const ShoeIcon = () => (
  <svg width="32" height="40" viewBox="0 0 32 40" aria-hidden="true">
    <path d="M16 1L20 0Q24 1 26 8L30 14L31 19L28 27L22 32L21 38L2 40L1 22Q5 22 4 18L7 16Q9 19 12 15L14 5Z" fill="#4b4b4b" />
    <path d="M19 4Q14 14 15 20T9 39M24 11Q19 17 19 23T14 35M21 17L29 16M19 22L30 20M18 26L27 26M16 30L24 29M14 34H21" fill="none" stroke="#f6f6f6" strokeWidth="1.200" />
  </svg>
);

const VideoIcon = () => (
  <svg width="40" height="30" viewBox="0 0 40 30" aria-hidden="true">
    <rect width="40" height="29" rx="8" fill="#4b4b4b" />
    <path d="M15 8L27 14.500L15 21Z" fill="#f6f6f6" />
  </svg>
);

const PillIcon = () => (
  <svg width="34" height="34" viewBox="0 0 34 34" aria-hidden="true">
    <g transform="rotate(42 17 17)">
      <rect x="10" y="-2" width="14" height="38" rx="7" fill="#f6f6f6" stroke="#4b4b4b" strokeWidth="2.500" />
      <path d="M10 17H24V29A7 7 0 0 1 10 29Z" fill="#4b4b4b" />
    </g>
  </svg>
);

const StatusDot = styled.span`
  width: 12px;
  height: 12px;
  margin-left: 15px;
  border-radius: 50%;
  background: #4b4b4b;
`;

const AlarmIcon = () => (
  <svg width="30" height="30" viewBox="0 0 30 30" fill="none" stroke="#4b4b4b" strokeLinecap="round" aria-hidden="true">
    <circle cx="15" cy="16" r="12.500" fill="#4b4b4b" stroke="none" />
    <path d="M1.500 7Q3 3 7 1.500M28.500 7Q27 3 23 1.500" strokeWidth="2.600" />
    <path d="M6 25L3.500 28.500M24 25L26.500 28.500" strokeWidth="3.500" />
    <path d="M14.500 9V17H20" stroke="#f6f6f6" strokeWidth="2.400" />
  </svg>
);

const MuteIcon = () => (
  <svg width="32" height="30" viewBox="0 0 32 30" aria-hidden="true">
    <path d="M1 10H7L21 24V29L9 20H1ZM12 7L21 1V16Z" fill="#4b4b4b" />
    <path d="M3 2L21 25" stroke="#4b4b4b" strokeWidth="3" />
    <path d="M24.500 8Q23 11 24.500 14T24.500 20T24.500 26M29 1Q27 4 29 8T29 14T29 20T29 27" fill="none" stroke="#4b4b4b" strokeWidth="2.400" />
  </svg>
);

const PlaceIcon = () => (
  <svg width="24" height="30" viewBox="0 0 24 30" aria-hidden="true">
    <path d="M12 0A12 12 0 0 1 24 12C24 20 12 30 12 30S0 20 0 12A12 12 0 0 1 12 0ZM12 7A5 5 0 1 0 12 17A5 5 0 0 0 12 7Z" fill="#4b4b4b" />
  </svg>
);

const WifiIcon = () => (
  <svg width="44" height="34" viewBox="0 0 44 34" fill="none" stroke="#4b4b4b" aria-hidden="true">
    <path d="M1 10Q18-6 36 10M6 17Q18 5 31 17M11 22Q18 15 26 22" strokeWidth="3.200" />
    <circle cx="18.500" cy="27" r="2.500" fill="#4b4b4b" stroke="none" />
    <path d="M28 20V32M24 27L28 32L32 27" stroke="#b4b4b4" strokeWidth="3" />
    <path d="M38 32V20M34 25L38 20L42 25" strokeWidth="3" />
  </svg>
);

const SignalIcon = () => (
  <svg width="28" height="30" viewBox="0 0 28 30" stroke="#4b4b4b" strokeWidth="3" aria-hidden="true">
    <path d="M2 24V30M10 15V30M18 8V30M26 1V30" />
  </svg>
);

const BatteryIcon = () => (
  <svg width="22" height="34" viewBox="0 0 22 34" aria-hidden="true">
    <path d="M6 1H16V5H18Q22 5 22 9V15H0V9Q0 5 4 5H6Z" fill="#b9b9b9" />
    <path d="M0 15H22V29Q22 33 18 33H4Q0 33 0 29Z" fill="#4b4b4b" />
  </svg>
);

export default function App() {
  return (
    <Screen>
      <GlobalStyle />
      <StatusBar>
        <StatusGroup $gap={11}>
          <CarrierIcon />
          <StatusTime>9:00</StatusTime>
          <ShoeIcon />
          <VideoIcon />
          <PillIcon />
          <StatusDot />
        </StatusGroup>
        <StatusGroup $gap={14}>
          <AlarmIcon />
          <MuteIcon />
          <PlaceIcon />
          <WifiIcon />
          <SignalIcon />
          <StatusGroup $gap={6}>
            <span>73%</span>
            <BatteryIcon />
          </StatusGroup>
        </StatusGroup>
      </StatusBar>

      <Content>
        <TopBar>
          <IconButton aria-label="뒤로">
            <svg width="30" height="58" viewBox="0 0 30 58" fill="none" stroke="#252525" strokeWidth="4" strokeLinecap="round" strokeLinejoin="round">
              <path d="M27 2L3 27Q1 29 3 31L27 56" />
            </svg>
          </IconButton>
          <Title>걷기</Title>
          <TopActions>
            <IconButton aria-label="공유">
              <svg width="46" height="50" viewBox="0 0 46 50" fill="#252525" stroke="#252525">
                <path d="M37 7L8 25L37 43" fill="none" strokeWidth="5" />
                <circle cx="37" cy="7" r="7" stroke="none" />
                <circle cx="8" cy="25" r="7" stroke="none" />
                <circle cx="37" cy="43" r="7" stroke="none" />
              </svg>
            </IconButton>
            <IconButton aria-label="더보기">
              <svg width="12" height="50" viewBox="0 0 12 50">
                <circle cx="6" cy="6" r="5" />
                <circle cx="6" cy="25" r="5" />
                <circle cx="6" cy="44" r="5" />
              </svg>
            </IconButton>
          </TopActions>
        </TopBar>

        <MetaRow>
          <div>
            <MetaLine>2월 25일 (토)</MetaLine>
            <MetaLine $muted>오전 6:53 - 오전 8:59</MetaLine>
          </div>
          <Awards>
            <Trophy kind="distance" label="거리" />
            <Trophy kind="duration" label="시간" />
            <Trophy kind="speed" label="속도" />
            <MoreBadge>+1</MoreBadge>
          </Awards>
        </MetaRow>

        <WorkoutCard>
          <Summary>
            <Distance>
              9.54<Unit $size={42}>km</Unit>
            </Distance>
            <SubStats>
              <span>01:31:16</span>
              <Divider />
              <span>
                6.2<Unit $size={36}>km/h</Unit>
              </span>
            </SubStats>
          </Summary>

          <MapFrame>
            <MapArt />
            {LABELS.map((l) => (
              <PlaceLabel key={l.t} $x={l.x} $y={l.y} $color={l.c} $big={l.big}>
                {l.t}
              </PlaceLabel>
            ))}
            {MARKERS.map((m) => (
              <KmMarker key={m.n} $x={m.x} $y={m.y} $fast={m.fast}>
                {m.n}
              </KmMarker>
            ))}
            <FlagPin $x={2788} $y={1619}>
              <FinishFlag />
            </FlagPin>
            <Wordmark>
              <Letter $c="#4285f4">G</Letter>
              <Letter $c="#e34133">o</Letter>
              <Letter $c="#f9bb06">o</Letter>
              <Letter $c="#4285f4">g</Letter>
              <Letter $c="#34a853">l</Letter>
              <Letter $c="#e34133">e</Letter>
            </Wordmark>
            <MapLegend>
              <MoonBox>
                <svg width="42" height="42" viewBox="0 0 42 42" aria-hidden="true">
                  <path d="M13 1A21 21 0 1 0 40 28C22 32 10 18 13 1Z" fill="#fcd500" />
                </svg>
              </MoonBox>
              <Temperature>-4.0°C</Temperature>
              <FastSwatch />
              <LegendText>가장 빠른 구간</LegendText>
            </MapLegend>
            <MapActions>
              <RoundButton aria-label="지도 확대">
                <svg width="46" height="46" viewBox="0 0 46 46" fill="none" stroke="#3f3f3f" strokeWidth="4" strokeLinecap="round" strokeLinejoin="round">
                  <path d="M4 42L42 4M26 3H43V19M3 27V43H20" />
                </svg>
              </RoundButton>
              <RoundButton aria-label="지도 유형">
                <svg width="50" height="52" viewBox="0 0 50 52" fill="none" stroke="#3f3f3f" strokeWidth="3" strokeLinecap="round" strokeLinejoin="round">
                  <path d="M25 2L48 16L25 30L2 16ZM4 23L2 26L25 40L48 26L46 23M4 33L2 36L25 50L48 36L46 33" />
                </svg>
              </RoundButton>
            </MapActions>
          </MapFrame>
        </WorkoutCard>

        <ChartCard>
          <Chips>
            <Chip $fg="#7cc1f9" $bg="#f4f9fd">속도</Chip>
            <Chip $fg="#36dc9b" $bg="#f1fdf8">고도</Chip>
          </Chips>
          <TooltipRow>
            <Tooltip>
              <Reading $dot="#7ac3ff">5.6 km/h</Reading>
              <Reading $dot="#34e49e">-4 m</Reading>
            </Tooltip>
          </TooltipRow>
          <AxisLabels>
            <span>km/h</span>
            <span>m</span>
          </AxisLabels>
        </ChartCard>
      </Content>

      <NavBar>
        <NavButton aria-label="최근 앱">
          <svg width="44" height="48" viewBox="0 0 44 48" stroke="#8f8f8f" strokeWidth="4" strokeLinecap="round">
            <path d="M3 3V45M22 3V45M41 3V45" />
          </svg>
        </NavButton>
        <NavButton aria-label="홈">
          <svg width="48" height="50" viewBox="0 0 48 50" fill="none" stroke="#8f8f8f" strokeWidth="4">
            <rect x="2" y="3" width="44" height="44" rx="13" />
          </svg>
        </NavButton>
        <NavButton aria-label="이전">
          <svg width="30" height="50" viewBox="0 0 30 50" fill="none" stroke="#8f8f8f" strokeWidth="4" strokeLinecap="round" strokeLinejoin="round">
            <path d="M27 3L3 25L27 47" />
          </svg>
        </NavButton>
      </NavBar>
    </Screen>
  );
}
